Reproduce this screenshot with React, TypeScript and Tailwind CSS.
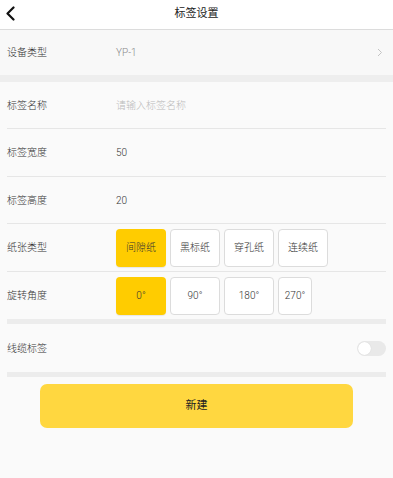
import { useState } from "react";

const paperTypes = ["间隙纸", "黑标纸", "穿孔纸", "连续纸"];
const angles = [
  { label: "0°", w: "w-[50px]" },
  { label: "90°", w: "w-[50px]" },
  { label: "180°", w: "w-[50px]" },
  { label: "270°", w: "w-[34px]" },
];

function OptionButton({ label, active, width, onClick }: { label: string; active: boolean; width: string; onClick: () => void }) {
  return (
    <button
      onClick={onClick}
      className={`${width} h-[38px] rounded-[4px] text-[10px] text-[#333] ${
        active ? "bg-[#ffcc00] shadow-[0_1px_1px_rgba(0,0,0,0.08)]" : "border border-[#dcdcdc] bg-white"
      }`}
    >
      {label}
    </button>
  );
}

export default function App() {
  const [paper, setPaper] = useState(0);
  const [angle, setAngle] = useState(0);
  const [cable, setCable] = useState(false);

  return (
    <div
      className="min-h-[478px] w-full bg-[#fafafa] font-light text-[#333]"
      style={{ fontFamily: 'Roboto, "Noto Sans CJK SC", sans-serif' }}
    >
      {/* header */}
      <div className="relative flex h-[30px] items-center justify-center border-b border-[#dcdcdc] bg-white">
        <svg className="absolute left-[5px] top-[6px]" width="11" height="15" viewBox="0 0 11 15" fill="none">
          <path d="M8.5 1.5 L2.5 7.5 L8.5 13.5" stroke="#111" strokeWidth="2.2" strokeLinecap="round" strokeLinejoin="round" />
        </svg>
        <span className="text-[11px] font-normal text-[#222]">标签设置</span>
      </div>

      {/* device type */}
      <div className="flex h-[45px] items-center bg-[#f8f8f8] px-[7px]">
        <span className="w-[109px] text-[10px]">设备类型</span>
        <span className="flex-1 text-[10px] text-[#888]">YP-1</span>
        <svg width="6" height="9" viewBox="0 0 6 9" fill="none" className="mr-[3px]">
          <path d="M1 1 L4.5 4.5 L1 8" stroke="#c4c4c4" strokeWidth="1" />
        </svg>
      </div>
      <div className="h-[7px] bg-[#eeeeee]" />

      <div className="px-[7px]">
        <div className="flex h-[47px] items-center border-b border-[#e6e6e6]">
          <span className="w-[109px] text-[10px]">标签名称</span>
          <span className="text-[10px] text-[#bbb]">请输入标签名称</span>
        </div>
        <div className="flex h-[48px] items-center border-b border-[#e6e6e6]">
          <span className="w-[109px] text-[10px]">标签宽度</span>
          <span className="text-[10px]">50</span>
        </div>
        <div className="flex h-[47px] items-center border-b border-[#e6e6e6]">
          <span className="w-[109px] text-[10px]">标签高度</span>
          <span className="text-[10px]">20</span>
        </div>
        <div className="flex h-[48px] items-center border-b border-[#e6e6e6]">
          <span className="w-[109px] text-[10px]">纸张类型</span>
          <div className="flex gap-[4px]">
            {paperTypes.map((p, i) => (
              <OptionButton key={p} label={p} width="w-[50px]" active={paper === i} onClick={() => setPaper(i)} />
            ))}
          </div>
        </div>
        <div className="flex h-[47px] items-center">
          <span className="w-[109px] text-[10px]">旋转角度</span>
          <div className="flex gap-[4px]">
            {angles.map((a, i) => (
              <OptionButton key={a.label} label={a.label} width={a.w} active={angle === i} onClick={() => setAngle(i)} />
            ))}
          </div>
        </div>
        <div className="h-[5px] bg-[#ececec]" />

        <div className="flex h-[48px] items-center justify-between">
          <span className="text-[10px]">线缆标签</span>
          <button
            onClick={() => setCable(!cable)}
            className={`flex h-[15px] w-[29px] items-center rounded-full px-[1px] ${cable ? "justify-end bg-[#ffcc00]" : "bg-[#e9e9e9]"}`}
          >
            <span className="h-[13px] w-[13px] rounded-full bg-white shadow-[0_0_1px_rgba(0,0,0,0.15)]" />
          </button>
        </div>
        <div className="h-[5px] bg-[#ececec]" />
      </div>

      <div className="flex justify-center pt-[7px]">
        <button className="h-[44px] w-[313px] rounded-[7px] bg-[#ffd740] text-[11px] font-normal text-[#222]">新建</button>
      </div>
    </div>
  );
}
